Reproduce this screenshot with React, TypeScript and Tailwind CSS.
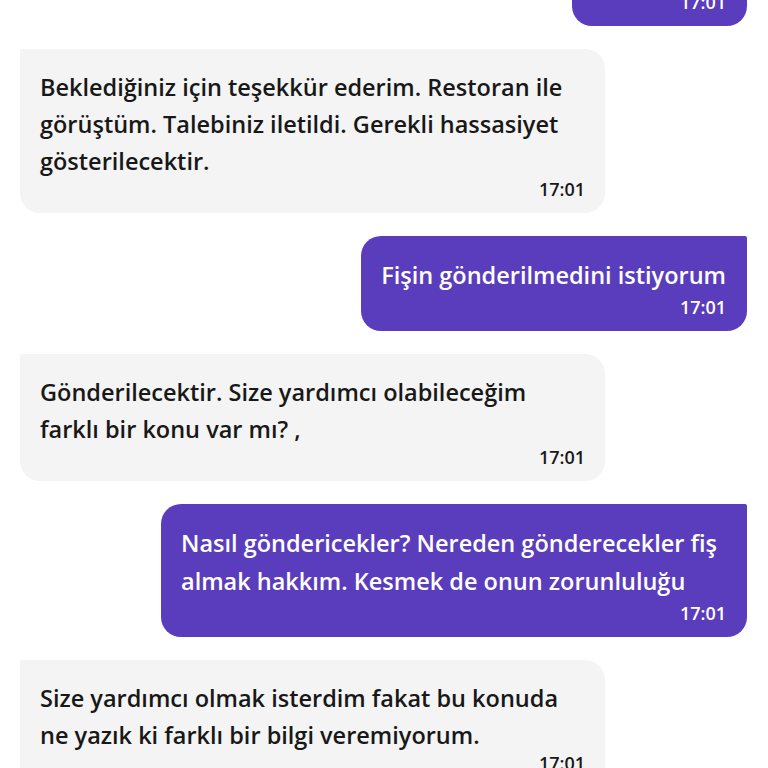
import React from 'react'

type Message = {
  id: number
  from: 'me' | 'agent'
  text: string
  time: string
}

const messages: Message[] = [
  { id: 1, from: 'me', text: 'Teşekkürler', time: '17:01' },
  {
    id: 2,
    from: 'agent',
    text: 'Beklediğiniz için teşekkür ederim. Restoran ile görüştüm. Talebiniz iletildi. Gerekli hassasiyet gösterilecektir.',
    time: '17:01',
  },
  { id: 3, from: 'me', text: 'Fişin gönderilmedini istiyorum', time: '17:01' },
  {
    id: 4,
    from: 'agent',
    text: 'Gönderilecektir. Size yardımcı olabileceğim farklı bir konu var mı? ,',
    time: '17:01',
  },
  {
    id: 5,
    from: 'me',
    text: 'Nasıl göndericekler? Nereden gönderecekler fiş almak hakkım. Kesmek de onun zorunluluğu',
    time: '17:01',
  },
  {
    id: 6,
    from: 'agent',
    text: 'Size yardımcı olmak isterdim fakat bu konuda ne yazık ki farklı bir bilgi veremiyorum.',
    time: '17:01',
  },
]

export default function App() {
  return (
    <div
      className="h-[768px] w-full overflow-hidden bg-white"
      style={{ fontFamily: '"Open Sans", "Noto Sans", sans-serif' }}
    >
      {/* sohbet listesi, aşağı kaydırılmış */}
      <div className="-mt-[69px] flex flex-col gap-[23px] pl-5 pr-[21px]">
        {messages.map((m) => (
          <Bubble key={m.id} message={m} />
        ))}
      </div>
    </div>
  )
}

function Bubble({ message }: { message: Message }) {
  const mine = message.from === 'me'

  if (mine) {
    return (
      <div className="flex justify-end">
        <div className="max-w-[586px] rounded-[20px] rounded-tr-[2px] bg-[#5a3dbd] pt-5 pb-3 pl-5 pr-[21px] text-white">
          <p className="text-[23.5px] font-semibold leading-[38px]">{message.text}</p>
          <p className="mt-px text-right text-[18px] font-semibold leading-[24px]">{message.time}</p>
        </div>
      </div>
    )
  }

  return (
    <div className="flex justify-start">
      <div className="max-w-[585px] rounded-[20px] rounded-tl-[2px] bg-[#f4f4f4] pt-5 pb-3 pl-5 pr-5 text-[#181818]">
        <p className="text-[23.5px] font-semibold leading-[37px]">{message.text}</p>
        <p className="-mt-[3px] text-right text-[18px] font-semibold leading-[24px]">{message.time}</p>
      </div>
    </div>
  )
}
